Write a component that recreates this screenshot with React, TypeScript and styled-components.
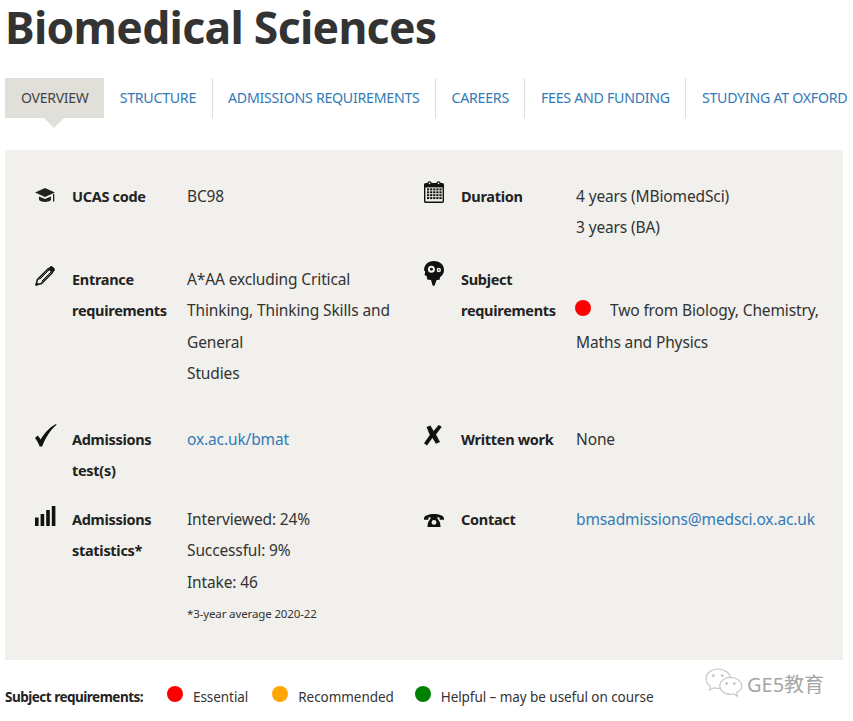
import React from 'react';
import styled, { createGlobalStyle } from 'styled-components';

const TABS = ['STRUCTURE', 'ADMISSIONS REQUIREMENTS', 'CAREERS', 'FEES AND FUNDING', 'STUDYING AT OXFORD'];

export default function App() {
  return (
    <Page>
      <GlobalStyle />
      <Title>Biomedical Sciences</Title>
      <TabBar>
        <ActiveTab>OVERVIEW</ActiveTab>
        {TABS.map((tab) => (
          <Tab key={tab}>{tab}</Tab>
        ))}
      </TabBar>
      <Panel>
        <FactRow $gap={20}>
          <Fact>
            <IconSlot $offset={7}><CapIcon /></IconSlot>
            <Label>UCAS code</Label>
            <Value>BC98</Value>
          </Fact>
          <Fact>
            <IconSlot $offset={0}><CalendarIcon /></IconSlot>
            <Label>Duration</Label>
            <Value>4 years (MBiomedSci)<br />3 years (BA)</Value>
          </Fact>
        </FactRow>
        <FactRow $gap={34}>
          <Fact>
            <IconSlot $offset={2}><PencilIcon /></IconSlot>
            <Label>Entrance<br />requirements</Label>
            <Value>A*AA excluding Critical<br />Thinking, Thinking Skills and<br />General<br />Studies</Value>
          </Fact>
          <Fact>
            <IconSlot $offset={-3}><HeadIcon /></IconSlot>
            <Label>Subject<br />requirements</Label>
            <Value>
              <br />
              <InlineDot $color="#ff0000" />Two from Biology, Chemistry,<br />Maths and Physics
            </Value>
          </Fact>
        </FactRow>
        <FactRow $gap={17}>
          <Fact>
            <IconSlot $offset={0}><CheckIcon /></IconSlot>
            <Label>Admissions<br />test(s)</Label>
            <Value><Link>ox.ac.uk/bmat</Link></Value>
          </Fact>
          <Fact>
            <IconSlot $offset={1}><CrossIcon /></IconSlot>
            <Label>Written work</Label>
            <Value>None</Value>
          </Fact>
        </FactRow>
        <FactRow $gap={0}>
          <Fact>
            <IconSlot $offset={2}><BarsIcon /></IconSlot>
            <Label>Admissions<br />statistics*</Label>
            <Value>
              Interviewed: 24%<br />Successful: 9%<br />Intake: 46
              <Note>*3-year average 2020-22</Note>
            </Value>
          </Fact>
          <Fact>
            <IconSlot $offset={10}><PhoneIcon /></IconSlot>
            <Label>Contact</Label>
            <Value><Link>bmsadmissions@medsci.ox.ac.uk</Link></Value>
          </Fact>
        </FactRow>
      </Panel>
      <Legend>
        <LegendTitle>Subject requirements:</LegendTitle>
        <LegendDot $color="#ff0000" />
        <LegendText $after={24}>Essential</LegendText>
        <LegendDot $color="#ffa500" />
        <LegendText $after={21}>Recommended</LegendText>
        <LegendDot $color="#008000" />
        <LegendText $after={0}>Helpful – may be useful on course</LegendText>
      </Legend>
      <Watermark>
        <WeChatIcon />
        <WatermarkText>GE5教育</WatermarkText>
      </Watermark>
    </Page>
  );
}

function CapIcon() {
  return (
    <svg width="20" height="15" viewBox="0 0 20 15" fill="#222">
      <path d="M10 0 L20 4.6 L10 9 L0 4.6 Z" />
      <path d="M4 8.4 L10 11 L16 8.4 V12 C14 14.6 6 14.6 4 12 Z" />
      <rect x="18" y="6" width="1.3" height="7.5" />
    </svg>
  );
}

function CalendarIcon() {
  const cells = [];
  for (let row = 0; row < 4; row++) {
    for (let col = 0; col < 5; col++) {
      cells.push(<rect key={`${row}-${col}`} x={3 + col * 3.1} y={7.4 + row * 2.9} width="2.2" height="2" fill="#111" />);
    }
  }
  return (
    <svg width="20" height="22" viewBox="0 0 20 22">
      <rect x="0.7" y="2.7" width="18.6" height="18.6" rx="1" fill="#f1f0ec" stroke="#111" strokeWidth="1.4" />
      <rect x="1" y="3" width="18" height="3.4" fill="#111" />
      <circle cx="5.5" cy="2.4" r="2.2" fill="#111" />
      <circle cx="14.5" cy="2.4" r="2.2" fill="#111" />
      <circle cx="5.5" cy="2.4" r="0.8" fill="#f1f0ec" />
      <circle cx="14.5" cy="2.4" r="0.8" fill="#f1f0ec" />
      {cells}
    </svg>
  );
}

function PencilIcon() {
  return (
    <svg width="20" height="20" viewBox="0 0 20 20" fill="none" stroke="#111">
      <path d="M1 19 L2.4 13.6 L13.5 2.5 L17.5 6.5 L6.4 17.6 Z" strokeWidth="1.5" strokeLinejoin="round" />
      <path d="M4.6 13.4 L14.6 3.4 M6.6 15.4 L16.6 5.4" strokeWidth="1" />
      <path d="M14 2 L15.6 0.5 Q16.4 0 17.2 0.6 L19.4 2.8 Q20 3.6 19.4 4.4 L18 6 Z" fill="#111" strokeWidth="0.6" />
      <path d="M1 19 L1.6 16.4 L3.6 18.4 Z" fill="#111" strokeWidth="0.6" />
    </svg>
  );
}

function HeadIcon() {
  return (
    <svg width="20" height="26" viewBox="0 0 20 26">
      <path
        d="M10 0 C15.8 0 20 3.8 20 8.8 C20 13 17.8 15 16 16.2 L15.6 18.8 L12.6 19 L10.4 25 L8.6 24.4 L7 19 L3.2 18.6 L2.8 15.2 L0.6 14 L1.2 10.6 C0.2 9.8 -0.1 8.8 0.1 7.8 C1 2.8 4.6 0 10 0 Z"
        fill="#111"
      />
      <circle cx="7.4" cy="8.2" r="3.5" fill="#f1f0ec" />
      <circle cx="7.4" cy="8.2" r="1.4" fill="#111" />
      <circle cx="14.8" cy="9" r="2.2" fill="#f1f0ec" />
      <circle cx="14.8" cy="9" r="0.8" fill="#111" />
    </svg>
  );
}

function CheckIcon() {
  return (
    <svg width="22" height="23" viewBox="0 0 22 23" fill="#111">
      <path d="M0 14 L2.6 11.6 C3.6 12.4 4.8 14 5.6 15.6 C9 9.6 14 3.6 21 0 L21.6 0.8 C15.4 6 10.6 13.4 7.2 22.4 L4.6 22.6 C3.6 19.6 2 16.4 0 14 Z" />
    </svg>
  );
}

function CrossIcon() {
  return (
    <svg width="18" height="21" viewBox="0 0 18 21" fill="#111">
      <path d="M2.6 2 L6.4 0.5 L9.6 6 L14.6 0 L17.8 1.8 L12 9.6 L16 17 L12 18.8 L8.4 13 L3 20.4 L0 18.2 L5.8 10 Z" />
    </svg>
  );
}

function BarsIcon() {
  return (
    <svg width="21" height="20" viewBox="0 0 21 20" fill="#111">
      <rect x="0" y="11.5" width="3.6" height="8.5" />
      <rect x="5.6" y="8" width="3.6" height="12" />
      <rect x="11.2" y="4" width="3.6" height="16" />
      <rect x="16.8" y="0" width="3.6" height="20" />
    </svg>
  );
}

function PhoneIcon() {
  return (
    <svg width="20" height="13" viewBox="0 0 20 13" fill="#111">
      <path d="M0 4.4 C0 1.6 5 0 10 0 C15 0 20 1.6 20 4.4 L20 5.8 L15.6 5.8 L15.6 3.6 L13.4 3.2 L13.4 4.4 L16 8.6 L16.6 13 L3.4 13 L4 8.6 L6.6 4.4 L6.6 3.2 L4.4 3.6 L4.4 5.8 L0 5.8 Z" />
      <circle cx="10" cy="8.4" r="2.4" fill="#f1f0ec" />
    </svg>
  );
}

function WeChatIcon() {
  return (
    <svg width="38" height="30" viewBox="0 0 38 30" fill="#fff" stroke="#c4c4c4" strokeWidth="1.1">
      <path d="M13 1 C6.5 1 1 5 1 10.6 C1 14 3 16.6 5.4 18.2 L4.4 22 L8.8 19.8 C10.4 20.2 12 20.4 13.6 20.4 C20 20.4 25.4 16 25.4 10.6 C25.4 5 19.6 1 13 1 Z" />
      <path d="M25.4 9.4 C19.6 9.4 14.8 13.2 14.8 18 C14.8 22.8 19.6 26.4 25.4 26.4 C26.6 26.4 27.8 26.2 29 25.8 L32.4 28.4 L31.6 24.6 C34.6 23 36.8 20.6 36.8 18 C36.8 13.2 31.2 9.4 25.4 9.4 Z" />
      <circle cx="8.4" cy="7.6" r="0.8" fill="#bbb" />
      <circle cx="17.4" cy="7.6" r="0.8" fill="#bbb" />
      <circle cx="21.6" cy="15.6" r="0.8" fill="#999" />
      <circle cx="29.4" cy="15.6" r="0.8" fill="#999" />
    </svg>
  );
}

const GlobalStyle = createGlobalStyle`
  html, body {
    margin: 0;
    padding: 0;
    background: #fff;
  }
  body {
    font-family: 'Noto Sans', 'Liberation Sans', sans-serif;
    color: #333;
    overflow: hidden;
  }
`;

const Page = styled.div`
  position: relative;
  width: 853px;
  height: 721px;
  padding-left: 5px;
  box-sizing: border-box;
  overflow: hidden;
`;

const Title = styled.h1`
  margin: 0;
  height: 78px;
  font-size: 44.5px;
  line-height: 54px;
  font-weight: 700;
  letter-spacing: -0.7px;
  color: #333;
`;

const TabBar = styled.div`
  display: flex;
  height: 40px;
  white-space: nowrap;
`;

const Tab = styled.a`
  display: block;
  padding: 0 15.5px;
  font-size: 14.2px;
  line-height: 39px;
  letter-spacing: -0.27px;
  color: #337ab7;
  border-right: 1px solid #ddd;

  &:last-child {
    border-right: 0;
  }
`;

const ActiveTab = styled(Tab)`
  position: relative;
  padding: 0 15px 0 16px;
  margin-right: 0.5px;
  font-size: 14px;
  letter-spacing: -0.25px;
  color: #444;
  background: #e0dfda;
  border-right: 0;

  &::after {
    content: '';
    position: absolute;
    left: 39px;
    top: 40px;
    border-style: solid;
    border-width: 10px 10px 0;
    border-color: #e0dfda transparent transparent;
  }
`;

const Panel = styled.div`
  width: 838px;
  height: 510px;
  margin-top: 32px;
  padding: 30.5px 0 0 30px;
  box-sizing: border-box;
  background: #f1f0ec;
`;

const FactRow = styled.div<{ $gap: number }>`
  display: grid;
  grid-template-columns: 389px 1fr;
  margin-bottom: ${({ $gap }) => $gap}px;
`;

const Fact = styled.div`
  display: grid;
  grid-template-columns: 37px 115px 1fr;
  font-size: 15.5px;
  line-height: 31.5px;
  letter-spacing: -0.13px;
`;

const IconSlot = styled.div<{ $offset: number }>`
  margin-top: ${({ $offset }) => $offset}px;
  line-height: 0;
`;

const Label = styled.div`
  font-size: 14.5px;
  font-weight: 700;
  letter-spacing: -0.3px;
  color: #222;
  white-space: nowrap;
`;

const Value = styled.div`
  white-space: nowrap;
`;

const Link = styled.a`
  color: #337ab7;
`;

const Note = styled.div`
  font-size: 11.5px;
`;

const InlineDot = styled.span<{ $color: string }>`
  display: inline-block;
  width: 16px;
  height: 16px;
  margin: 0 19px 0 -1px;
  border-radius: 50%;
  background: ${({ $color }) => $color};
`;

const Legend = styled.div`
  display: flex;
  align-items: center;
  margin-top: 27px;
  height: 20px;
  font-size: 13.5px;
  white-space: nowrap;
  letter-spacing: -0.06px;
`;

const LegendTitle = styled.strong`
  width: 162px;
  letter-spacing: -0.5px;
  color: #222;
`;

const LegendDot = styled.span<{ $color: string }>`
  width: 16px;
  height: 16px;
  margin: -6px 10px 0 0;
  border-radius: 50%;
  background: ${({ $color }) => $color};
`;

const LegendText = styled.span<{ $after: number }>`
  margin-right: ${({ $after }) => $after}px;
`;

const Watermark = styled.div`
  position: absolute;
  left: 705px;
  top: 668px;
  display: flex;
  align-items: center;
  gap: 4px;
`;

const WatermarkText = styled.span`
  font-family: 'Noto Sans', 'Noto Sans CJK SC', sans-serif;
  font-size: 20px;
  color: #a6a6a6;
`;
